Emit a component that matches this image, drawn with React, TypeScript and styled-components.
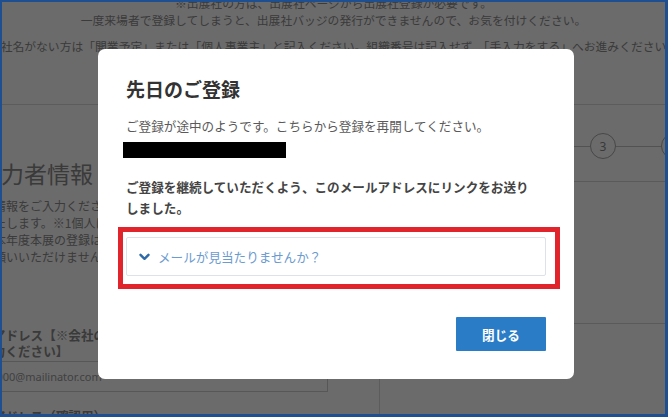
import React from 'react';
import styled, { createGlobalStyle } from 'styled-components';

const GlobalStyle = createGlobalStyle`
  html, body { margin: 0; padding: 0; }
  body {
    font-family: "Noto Sans CJK JP", "Noto Sans", sans-serif;
    background: #ffffff;
  }
  *, *::before, *::after { box-sizing: border-box; }
`;

const Frame = styled.div`
  position: relative;
  width: 668px;
  height: 417px;
  border-style: solid;
  border-color: #1d4f91;
  border-width: 2px 3px 3px 2px;
  overflow: hidden;
  background: #ffffff;
`;

const Page = styled.div`
  display: flex;
  flex-direction: column;
  height: 100%;
  color: #8a8a8a;
`;

const Notice = styled.div<{ $gap: number }>`
  display: flex;
  justify-content: center;
  white-space: nowrap;
  font-size: 11.8px;
  line-height: 17px;
  margin-top: ${(p) => p.$gap}px;
  color: #8c8c8c;
`;

const Columns = styled.div`
  display: flex;
  margin-top: 50px;
  border-top: 1px solid #dcdcdc;
  flex: 1;
`;

const FormColumn = styled.div`
  width: 378px;
  flex: none;
  border-right: 1px solid #dcdcdc;
  padding-top: 53px;
  display: flex;
  flex-direction: column;
`;

const SideColumn = styled.div`
  flex: 1;
  display: flex;
  flex-direction: column;
  overflow: hidden;
`;

const Heading = styled.h2`
  margin: 0 0 0 -24px;
  font-size: 23px;
  line-height: 30px;
  font-weight: 400;
  color: #8a8a8a;
  white-space: nowrap;
`;

const Lead = styled.p`
  margin: 9px 0 0 -20px;
  font-size: 12px;
  line-height: 17px;
  color: #8c8c8c;
  white-space: nowrap;
`;

const FieldLabel = styled.div<{ $top: number }>`
  margin: ${(p) => p.$top}px 0 0 -47px;
  font-size: 12.6px;
  line-height: 16px;
  font-weight: 700;
  color: #8a8a8a;
  white-space: nowrap;
`;

const FieldInput = styled.div`
  margin: 2px 0 0 -34px;
  width: 360px;
  height: 31px;
  flex: none;
  border: 1px solid #cfcfcf;
  padding: 0 8px;
  display: flex;
  align-items: center;
  font-size: 11px;
  color: #9a9a9a;
  font-family: "Noto Sans", sans-serif;
  background: #fff;
`;

const Stepper = styled.div`
  display: flex;
  align-items: center;
  margin-top: 28px;
  padding-left: 68px;
  height: 26px;
  flex: none;
`;

const StepCircle = styled.div`
  width: 26px;
  height: 26px;
  flex: none;
  border-radius: 50%;
  border: 1px solid #a8a8a8;
  display: flex;
  align-items: center;
  justify-content: center;
  font-size: 12px;
  color: #888;
  font-family: "Noto Sans", sans-serif;
`;

const StepLine = styled.div`
  width: 45px;
  height: 1px;
  flex: none;
  background: #c4c4c4;
`;

const SideBlock = styled.div<{ $top: number; $height: number }>`
  margin-top: ${(p) => p.$top}px;
  height: ${(p) => p.$height}px;
  border-top: 1px solid #d6d6d6;
  flex: none;
`;

const Overlay = styled.div`
  position: absolute;
  inset: 0;
  background: rgba(0, 0, 0, 0.58);
  display: flex;
  align-items: flex-start;
  padding: 47px 0 0 96px;
`;

const Modal = styled.div`
  width: 476px;
  background: #ffffff;
  border-radius: 7px;
  padding: 27px 28px 28px;
  display: flex;
  flex-direction: column;
`;

const Title = styled.h1`
  margin: 0;
  font-size: 19px;
  line-height: 26px;
  font-weight: 700;
  color: #333333;
`;

const Message = styled.p`
  margin: 13px 0 0;
  font-size: 12.6px;
  line-height: 22px;
  color: #5a5a5a;
  white-space: nowrap;
`;

const Redacted = styled.div`
  margin: 5px 0 0 -3px;
  width: 163px;
  height: 16px;
  background: #000000;
`;

const Notice2 = styled.p`
  margin: 18px 0 0;
  max-width: 408px;
  font-size: 12.6px;
  line-height: 21px;
  font-weight: 700;
  color: #444444;
`;

const AccordionWrap = styled.div`
  position: relative;
  margin-top: 19px;
`;

const Accordion = styled.button`
  width: 100%;
  height: 39px;
  border: 1px solid #dde1e8;
  border-radius: 2px;
  background: #ffffff;
  display: flex;
  align-items: center;
  gap: 8px;
  padding: 0 0 0 12px;
  font-family: inherit;
  font-size: 12.6px;
  color: #6c9bd0;
  cursor: pointer;
  text-align: left;
`;

const Highlight = styled.div`
  position: absolute;
  left: -8px;
  right: -14px;
  top: -10px;
  bottom: -13px;
  border: 5px solid #e1232b;
  pointer-events: none;
`;

const Footer = styled.div`
  display: flex;
  justify-content: flex-end;
  margin-top: 41px;
`;

const CloseButton = styled.button`
  width: 90px;
  height: 34px;
  border: none;
  border-radius: 1px;
  background: #2b7cc7;
  color: #ffffff;
  font-family: inherit;
  font-size: 12.6px;
  font-weight: 700;
  cursor: pointer;
`;

const Chevron = () => (
  <svg width="11" height="8" viewBox="0 0 11 8" aria-hidden="true">
    <path d="M1.5 1.8 L5.5 5.8 L9.5 1.8" fill="none" stroke="#2f6aa8" strokeWidth="2.4" strokeLinecap="round" strokeLinejoin="round" />
  </svg>
);

export default function App() {
  return (
    <>
      <GlobalStyle />
      <Frame>
        <Page>
          <Notice $gap={-8}>※出展社の方は、出展社ページから出展社登録が必要です。</Notice>
          <Notice $gap={0}>一度来場者で登録してしまうと、出展社バッジの発行ができませんので、お気を付けください。</Notice>
          <Notice $gap={9}>会社名がない方は「開業予定」または「個人事業主」と記入ください。組織番号は記入せず、「手入力をする」へお進みください。</Notice>
          <Columns>
            <FormColumn>
              <Heading>入力者情報</Heading>
              <Lead>
                の情報をご入力ください。
                <br />
                いたします。※1個人につき
                <br />
                ※本年度本展の登録は
                <br />
                お願いいただけません。
              </Lead>
              <FieldLabel $top={62}>
                メールアドレス【※会社の
                <br />
                をご入力ください】
              </FieldLabel>
              <FieldInput>test000@mailinator.com</FieldInput>
              <FieldLabel $top={16}>メールアドレス（確認用）</FieldLabel>
            </FormColumn>
            <SideColumn>
              <Stepper>
                <StepCircle>1</StepCircle>
                <StepLine />
                <StepCircle>2</StepCircle>
                <StepLine />
                <StepCircle>3</StepCircle>
                <StepLine />
                <StepCircle>4</StepCircle>
              </Stepper>
              <SideBlock $top={22} $height={142} />
              <SideBlock $top={0} $height={60} />
            </SideColumn>
          </Columns>
        </Page>
        <Overlay>
          <Modal role="dialog" aria-modal="true">
            <Title>先日のご登録</Title>
            <Message>ご登録が途中のようです。こちらから登録を再開してください。</Message>
            <Redacted />
            <Notice2>ご登録を継続していただくよう、このメールアドレスにリンクをお送りしました。</Notice2>
            <AccordionWrap>
              <Accordion type="button">
                <Chevron />
                メールが見当たりませんか？
              </Accordion>
              <Highlight />
            </AccordionWrap>
            <Footer>
              <CloseButton type="button">閉じる</CloseButton>
            </Footer>
          </Modal>
        </Overlay>
      </Frame>
    </>
  );
}
